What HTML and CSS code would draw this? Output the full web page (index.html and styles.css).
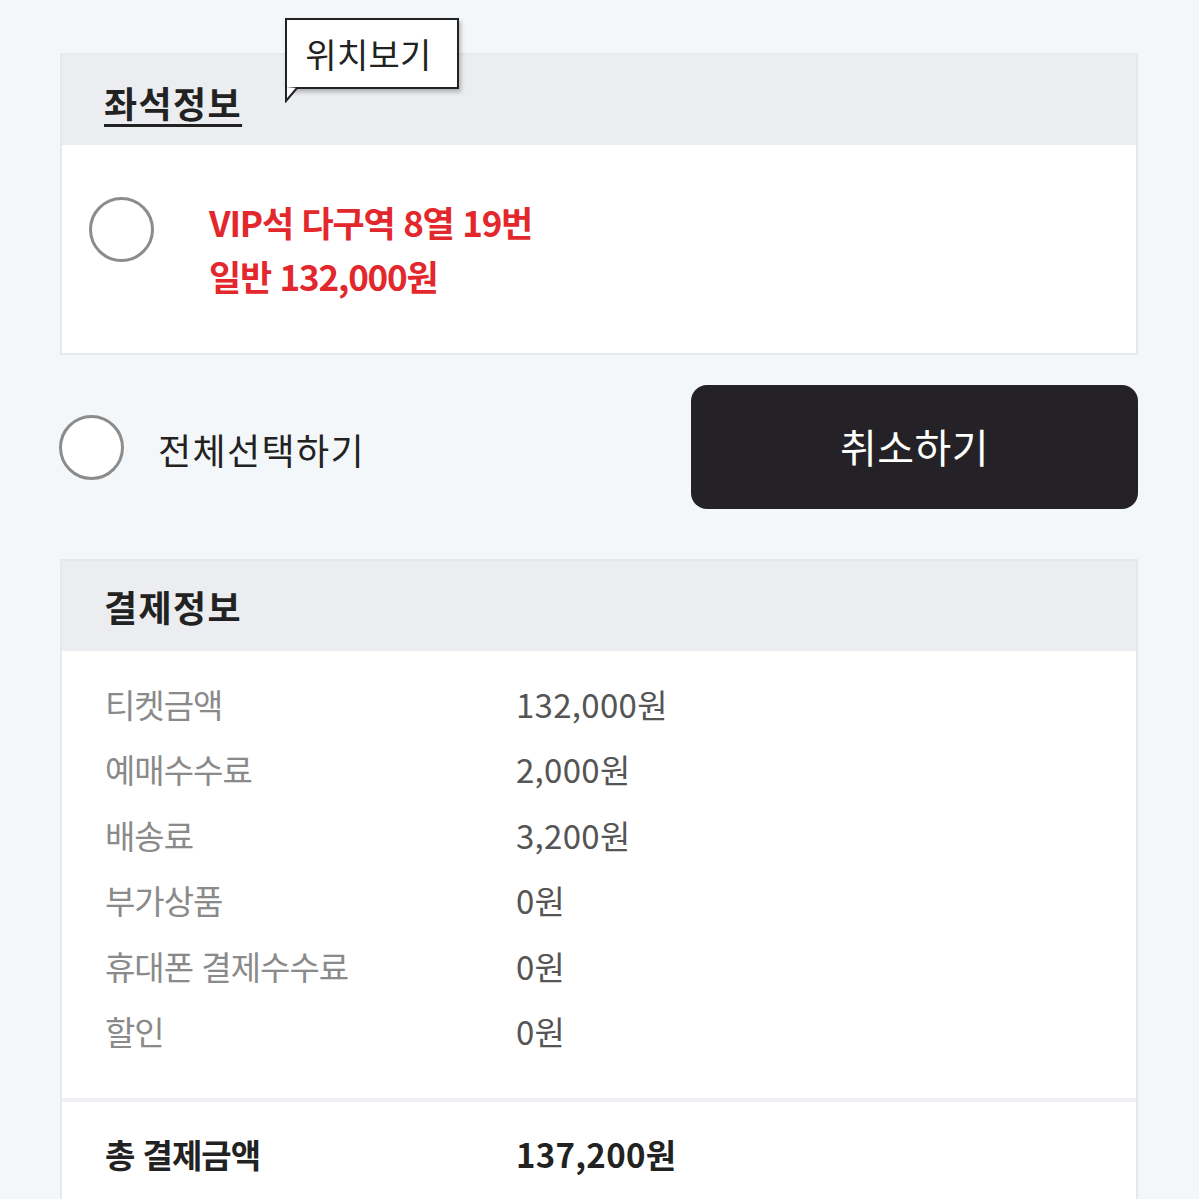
FILE: index.html
```html
<!DOCTYPE html>
<html lang="ko">
<head>
<meta charset="utf-8">
<title>좌석정보</title>
<link rel="stylesheet" href="styles.css">
</head>
<body>
<div class="page">
  <section class="card seat-card">
    <div class="card-head">
      <h2 class="title title-link">좌석정보</h2>
      <div class="tooltip">
        <span>위치보기</span>
        <svg class="tail" width="14" height="16" viewBox="0 0 14 16"><path d="M1 0 L1 14 L12 1" fill="#fff" stroke="#222" stroke-width="2"/></svg>
      </div>
    </div>
    <div class="seat-body">
      <span class="radio"></span>
      <div class="seat-text">
        <p>VIP석 다구역 8열 19번</p>
        <p>일반 132,000원</p>
      </div>
    </div>
  </section>

  <div class="action-row">
    <label class="select-all"><span class="radio"></span><span class="select-label">전체선택하기</span></label>
    <button class="cancel-btn">취소하기</button>
  </div>

  <section class="card pay-card">
    <div class="card-head">
      <h2 class="title">결제정보</h2>
    </div>
    <div class="pay-body">
      <div class="pay-row"><span class="label">티켓금액</span><span class="value">132,000원</span></div>
      <div class="pay-row"><span class="label">예매수수료</span><span class="value">2,000원</span></div>
      <div class="pay-row"><span class="label">배송료</span><span class="value">3,200원</span></div>
      <div class="pay-row"><span class="label">부가상품</span><span class="value">0원</span></div>
      <div class="pay-row"><span class="label">휴대폰 결제수수료</span><span class="value">0원</span></div>
      <div class="pay-row"><span class="label">할인</span><span class="value">0원</span></div>
    </div>
    <div class="pay-total">
      <div class="pay-row total"><span class="label">총 결제금액</span><span class="value">137,200원</span></div>
    </div>
  </section>
</div>
</body>
</html>
```

FILE: styles.css
```css
* { box-sizing: border-box; }
html, body { margin: 0; padding: 0; }
body {
  background: #f4f7f9;
  font-family: "Noto Sans CJK KR", "Noto Sans", sans-serif;
  color: #222;
  height: 1199px;
  overflow: hidden;
}
.page {
  padding: 53px 61px 0 60px;
}
.card {
  background: #fff;
  border: 2px solid #e6e8eb;
}
.card-head {
  position: relative;
  height: 90px;
  background: #ebedf0;
  display: flex;
  align-items: center;
  padding-left: 42px;
}
.title {
  margin: 0;
  font-size: 36px;
  font-weight: 700;
  letter-spacing: 1.4px;
  line-height: 1;
  color: #222;
}
.title-link {
  text-decoration: underline;
  text-decoration-thickness: 3px;
  text-underline-offset: 6px;
  padding-top: 4px;
}
.tooltip {
  position: absolute;
  left: 223px;
  top: -37px;
  width: 174px;
  height: 71px;
  padding-right: 7px;
  background: #fff;
  border: 2px solid #222;
  box-shadow: 2px 3px 4px rgba(0,0,0,0.25);
  display: flex;
  align-items: center;
  justify-content: center;
}
.tooltip span {
  font-size: 34px;
  letter-spacing: 0.3px;
  color: #222;
  line-height: 1;
}
.tooltip .tail {
  position: absolute;
  left: -2px;
  top: 67px;
}
.seat-body {
  height: 208px;
  display: flex;
  align-items: flex-start;
  padding: 52px 0 0 27px;
}
.radio {
  flex: none;
  width: 65px;
  height: 65px;
  border-radius: 50%;
  border: 3px solid #8c8c8c;
  background: #fff;
}
.seat-text {
  margin-left: 55px;
  color: #e3282d;
  font-size: 35px;
  font-weight: 700;
  letter-spacing: -1.2px;
  line-height: 54px;
  margin-top: -2px;
}
.seat-text p { margin: 0; }
.action-row {
  margin-top: 30px;
  display: flex;
  align-items: center;
  justify-content: space-between;
}
.select-all {
  display: flex;
  align-items: center;
  padding-left: 59px;
  margin-left: -60px;
}
.select-label {
  margin-left: 34px;
  font-size: 36px;
  letter-spacing: 1.4px;
  color: #222;
  padding-top: 4px;
}
.cancel-btn {
  width: 447px;
  height: 124px;
  border: none;
  border-radius: 16px;
  background: #242226;
  color: #fff;
  font-family: inherit;
  font-size: 40px;
  letter-spacing: 0.5px;
  padding: 0 0 2px 0;
}
.pay-card {
  margin-top: 50px;
  border-bottom: none;
}
.pay-body {
  padding: 20px 0 34px 43px;
  border-bottom: 4px solid #eef0f3;
}
.pay-row {
  display: flex;
  height: 65.5px;
  align-items: center;
  font-size: 33px;
}
.pay-row .label {
  width: 411px;
  color: #8a8a8a;
  letter-spacing: -1px;
}
.pay-row .value {
  color: #555;
  letter-spacing: 0.3px;
}
.pay-total {
  padding: 19px 0 40px 43px;
}
.pay-row.total .label,
.pay-row.total .value {
  color: #222;
  font-weight: 700;
}
```
